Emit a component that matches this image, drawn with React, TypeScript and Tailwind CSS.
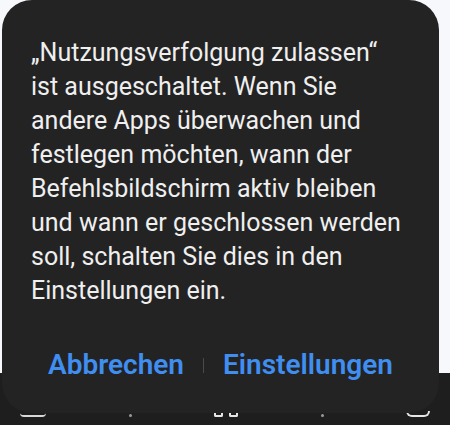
const lines = [
  '„Nutzungsverfolgung zulassen“',
  'ist ausgeschaltet. Wenn Sie',
  'andere Apps überwachen und',
  'festlegen möchten, wann der',
  'Befehlsbildschirm aktiv bleiben',
  'und wann er geschlossen werden',
  'soll, schalten Sie dies in den',
  'Einstellungen ein.',
]

export default function App() {
  return (
    <div className="relative h-[425px] w-[450px] overflow-hidden bg-[#f7f8fb] font-['Roboto',sans-serif]">
      {/* page behind the dialog */}
      <div className="flex h-full flex-col">
        <div className="flex-1 bg-[#f7f8fb]" />
        <div className="flex h-[52px] items-end justify-between bg-[#1e1e1e] px-[20px] pb-[8px]">
          <div className="h-[4px] w-[26px] rounded-b-full border-b-2 border-[#d8d8d8]" />
          <div className="h-[3px] w-[3px] rounded-full bg-[#9a9a9a]" />
          <div className="flex gap-[6px]">
            <div className="h-[4px] w-[9px] rounded-b-[2px] border-x-2 border-b-2 border-[#e6e6e6]" />
            <div className="h-[4px] w-[9px] rounded-b-[2px] border-x-2 border-b-2 border-[#e6e6e6]" />
          </div>
          <div className="h-[3px] w-[3px] rounded-full bg-[#9a9a9a]" />
          <div className="h-[6px] w-[24px] rounded-b-full border-x-2 border-b-2 border-[#e6e6e6]" />
        </div>
      </div>

      {/* dialog */}
      <div className="absolute left-[2px] top-0 flex h-[413px] w-[437px] flex-col rounded-[30px] bg-[#232323] px-[29px] pt-[36px]">
        <p className="whitespace-nowrap text-[25px] leading-[34px] text-[#efefef]">
          {lines.map((l, i) => (
            <span key={i} className="block">
              {l}
            </span>
          ))}
        </p>
        <div className="mt-[40px] flex items-center justify-center">
          <button className="text-[28px] font-semibold leading-[34px] text-[#3f8ef0]">Abbrechen</button>
          <div className="mx-[19px] h-[15px] w-px bg-[#4a4a4a]" />
          <button className="text-[28px] font-semibold leading-[34px] text-[#3f8ef0]">Einstellungen</button>
        </div>
      </div>
    </div>
  )
}
